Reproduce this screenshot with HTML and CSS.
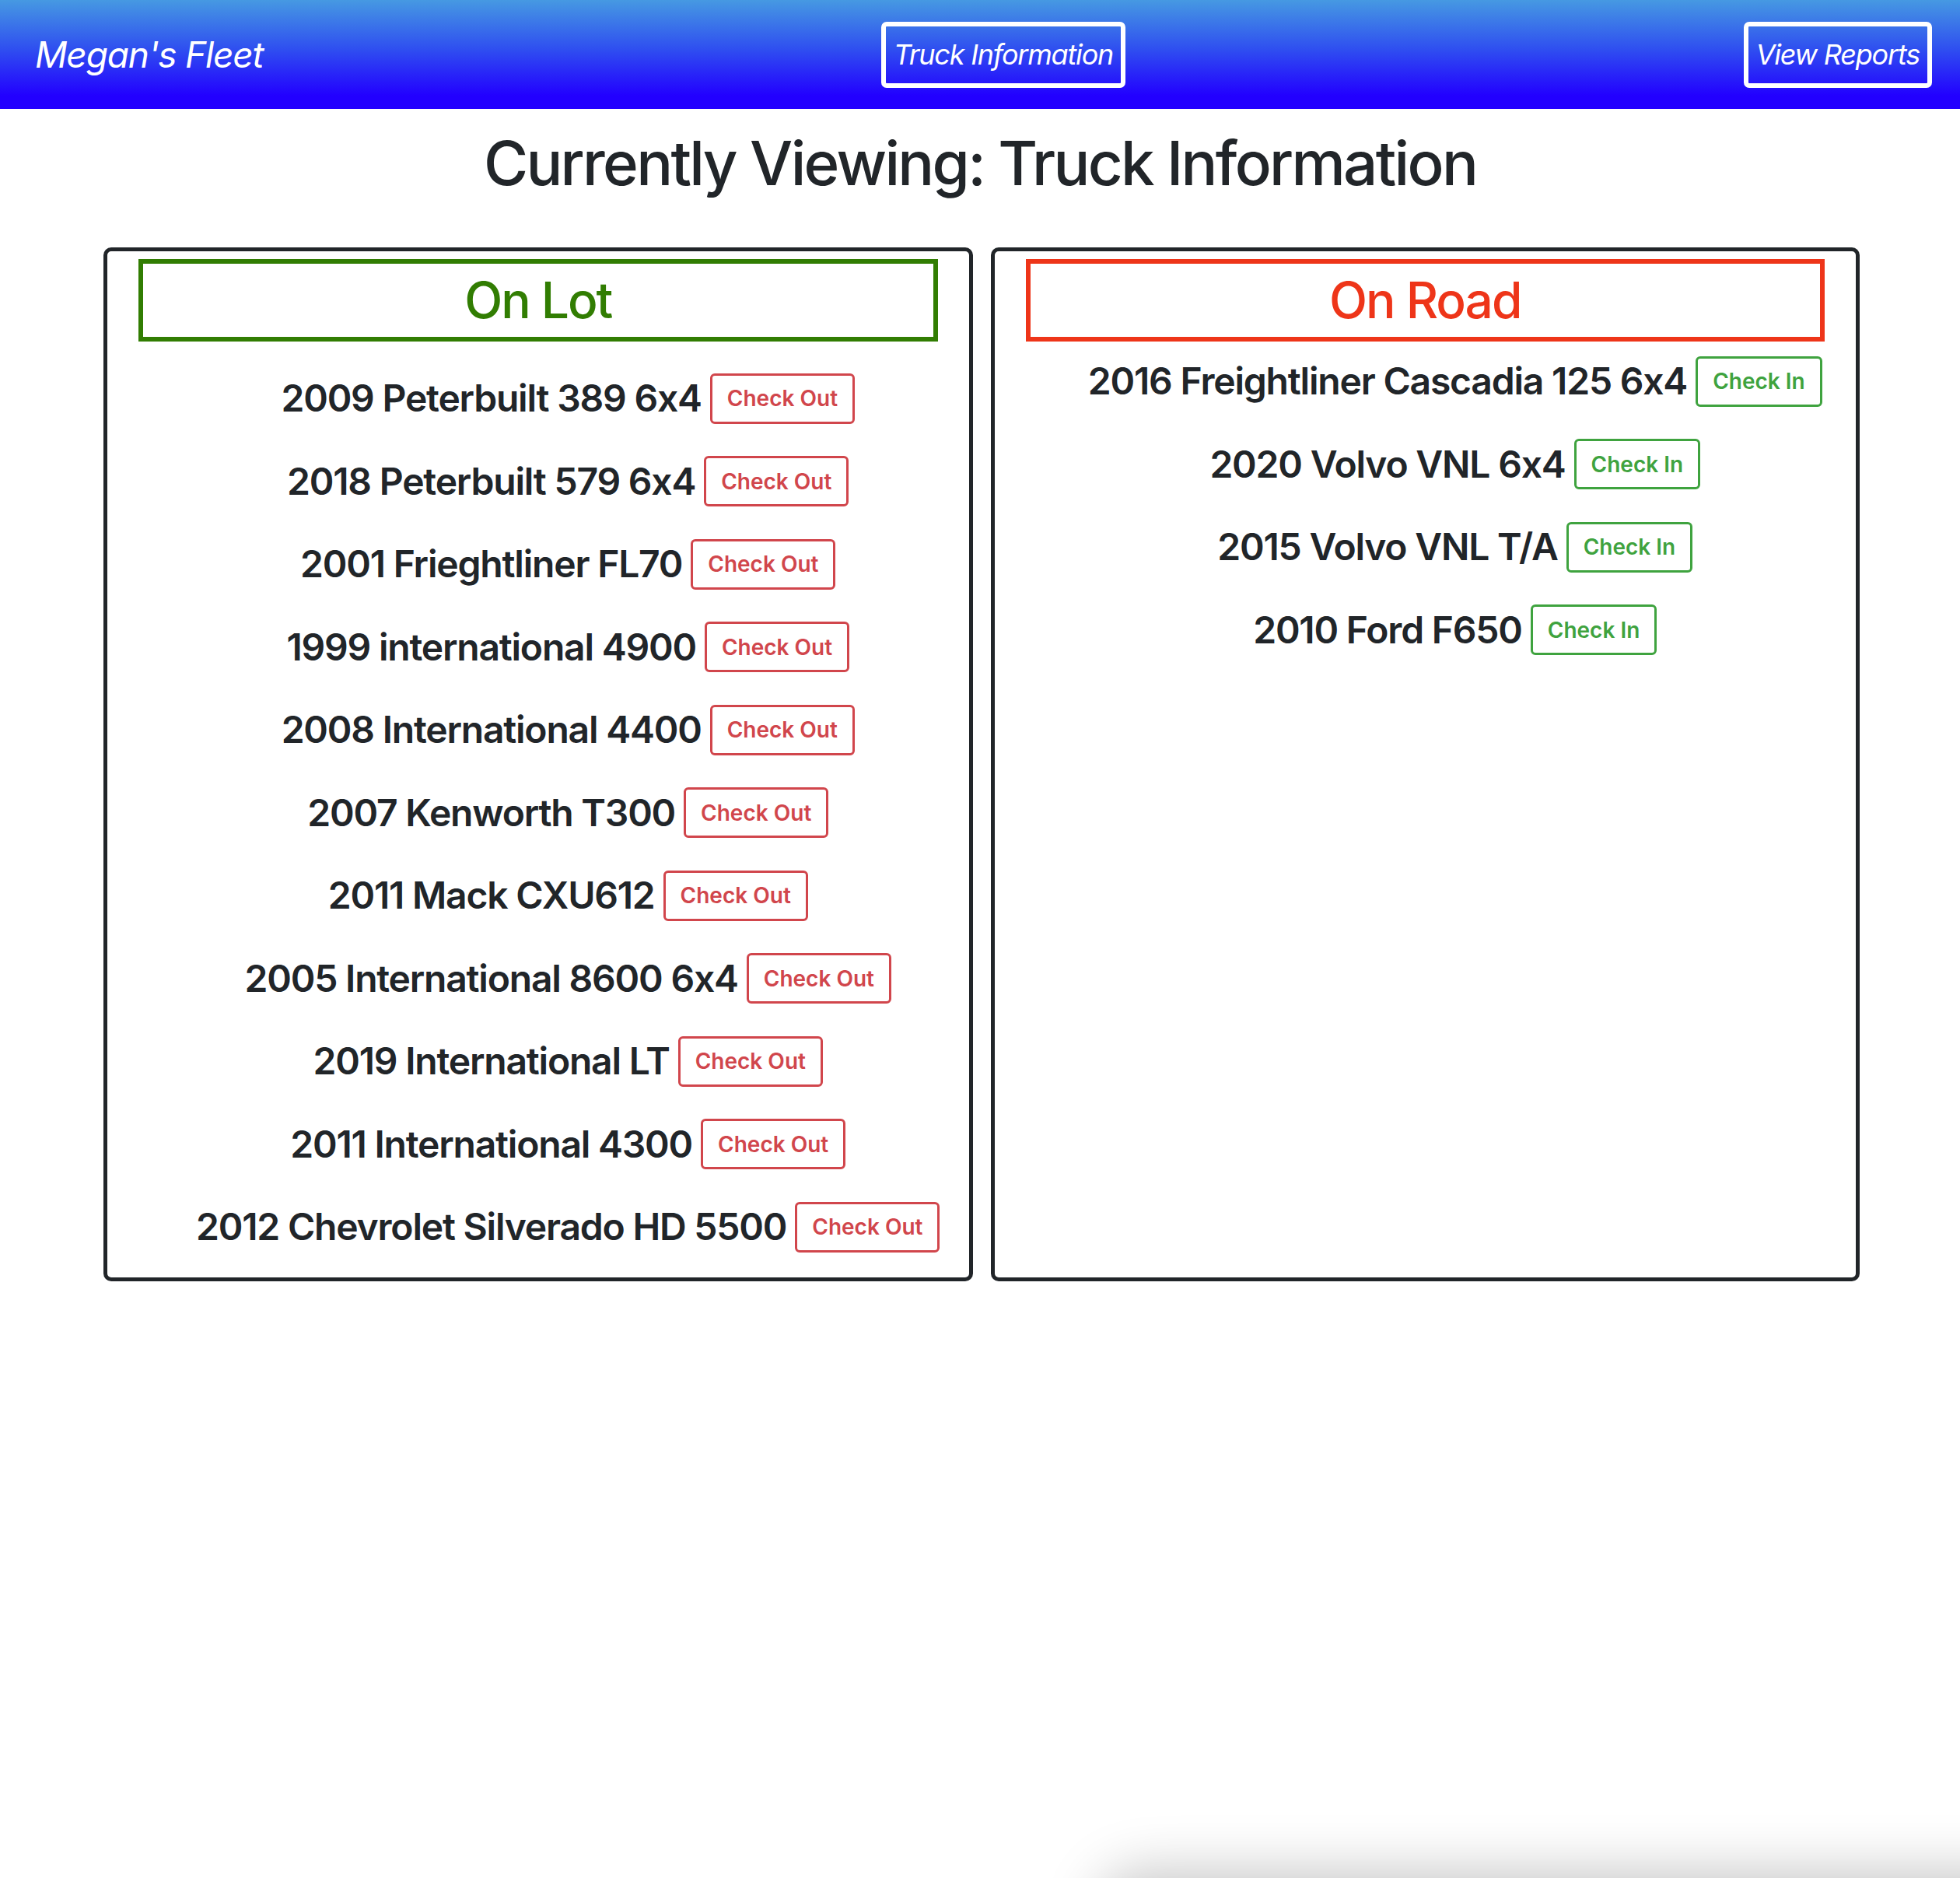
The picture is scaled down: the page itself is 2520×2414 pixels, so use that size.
FILE: index.html
```html
<!DOCTYPE html>
<html lang="en">
<head>
<meta charset="utf-8">
<title>Megan's Fleet</title>
<link rel="stylesheet" href="styles.css">
</head>
<body>
<nav class="navbar">
  <a class="brand" href="#">Megan's Fleet</a>
  <a class="nav-btn" href="#">Truck Information</a>
  <a class="nav-btn" href="#">View Reports</a>
</nav>
<main class="page">
  <h1 class="page-title">Currently Viewing: Truck Information</h1>
  <div class="boards">
    <section class="board">
      <h2 class="board-head head-lot">On Lot</h2>
      <ul class="truck-list list-lot">
        <li class="truck"><span class="truck-name">2009 Peterbuilt 389 6x4</span><button class="btn btn-out">Check Out</button></li>
        <li class="truck"><span class="truck-name">2018 Peterbuilt 579 6x4</span><button class="btn btn-out">Check Out</button></li>
        <li class="truck"><span class="truck-name">2001 Frieghtliner FL70</span><button class="btn btn-out">Check Out</button></li>
        <li class="truck"><span class="truck-name">1999 international 4900</span><button class="btn btn-out">Check Out</button></li>
        <li class="truck"><span class="truck-name">2008 International 4400</span><button class="btn btn-out">Check Out</button></li>
        <li class="truck"><span class="truck-name">2007 Kenworth T300</span><button class="btn btn-out">Check Out</button></li>
        <li class="truck"><span class="truck-name">2011 Mack CXU612</span><button class="btn btn-out">Check Out</button></li>
        <li class="truck"><span class="truck-name">2005 International 8600 6x4</span><button class="btn btn-out">Check Out</button></li>
        <li class="truck"><span class="truck-name">2019 International LT</span><button class="btn btn-out">Check Out</button></li>
        <li class="truck"><span class="truck-name">2011 International 4300</span><button class="btn btn-out">Check Out</button></li>
        <li class="truck"><span class="truck-name">2012 Chevrolet Silverado HD 5500</span><button class="btn btn-out">Check Out</button></li>
      </ul>
    </section>
    <section class="board">
      <h2 class="board-head head-road">On Road</h2>
      <ul class="truck-list list-road">
        <li class="truck"><span class="truck-name">2016 Freightliner Cascadia 125 6x4</span><button class="btn btn-in">Check In</button></li>
        <li class="truck"><span class="truck-name">2020 Volvo VNL 6x4</span><button class="btn btn-in">Check In</button></li>
        <li class="truck"><span class="truck-name">2015 Volvo VNL T/A</span><button class="btn btn-in">Check In</button></li>
        <li class="truck"><span class="truck-name">2010 Ford F650</span><button class="btn btn-in">Check In</button></li>
      </ul>
    </section>
  </div>
</main>
<div class="dock-shadow"></div>
</body>
</html>
```
FILE: styles.css
```css
* { box-sizing: border-box; }
html, body { margin: 0; padding: 0; background: #fff; }
body {
  font-family: "Inter", "Liberation Sans", sans-serif;
  font-feature-settings: "calt" 0;
  color: #212529;
  min-height: 2414px;
}
.navbar {
  height: 140px;
  display: flex;
  align-items: center;
  justify-content: space-between;
  padding: 0 36px 0 45px;
  background: linear-gradient(to bottom, #4699e2 0%, #2f4ff0 45%, #2200ff 88%, #2200ff 100%);
}
.brand {
  color: #fff;
  font-style: italic;
  font-size: 46px;
  letter-spacing: -1.2px;
  font-weight: 400;
  text-decoration: none;
}
.nav-btn {
  color: #fff;
  font-style: italic;
  font-size: 36px;
  letter-spacing: -1.2px;
  text-decoration: none;
  border: 6px solid #fff;
  border-radius: 7px;
  padding: 8px 10px;
  line-height: 57px;
}
.page-title {
  margin: 22px 0 60px;
  text-align: center;
  font-size: 78px;
  letter-spacing: -2.7px;
  font-weight: 500;
  line-height: 96px;
}
.boards {
  display: grid;
  grid-template-columns: minmax(0, 1fr) minmax(0, 1fr);
  gap: 23px;
  margin: 0 129px 0 133px;
}
.board {
  min-width: 0;
  border: 5px solid #212529;
  border-radius: 10px;
  padding: 10px 40px 32px;
}
.board-head {
  margin: 0;
  height: 106px;
  border: 6px solid;
  text-align: center;
  font-size: 64px;
  letter-spacing: -2px;
  font-weight: 500;
  line-height: 94px;
}
.head-lot { color: #317d02; border-color: #317d02; }
.head-road { color: #ee3519; border-color: #ee3519; }
.truck-list {
  list-style: none;
  margin: 40px 0 0;
  padding: 0 0 0 77px;
  display: flex;
  flex-direction: column;
  gap: 40.5px;
}
.list-road { margin-top: 18px; }
.truck {
  display: flex;
  justify-content: center;
  align-items: center;
  gap: 11px;
  height: 66px;
  white-space: nowrap;
}
.truck-name {
  flex: none;
  font-size: 48px;
  font-weight: 600;
  letter-spacing: -1.2px;
  line-height: 58px;
}
.btn {
  flex: none;
  font-family: inherit;
  background: #fff;
  font-size: 28px;
  font-weight: 600;
  border: 3px solid;
  border-radius: 6px;
  padding: 0 19px;
  height: 65px;
  line-height: 42px;
  white-space: nowrap;
}
.btn-out { color: #d1464c; border-color: #d1464c; }
.btn-in { color: #3fa33f; border-color: #3fa33f; }
.dock-shadow {
  position: fixed;
  left: 1420px;
  right: -200px;
  top: 2414px;
  height: 100px;
  border-radius: 60px;
  box-shadow: 0 0 70px 10px rgba(0, 0, 0, 0.22);
}
```
